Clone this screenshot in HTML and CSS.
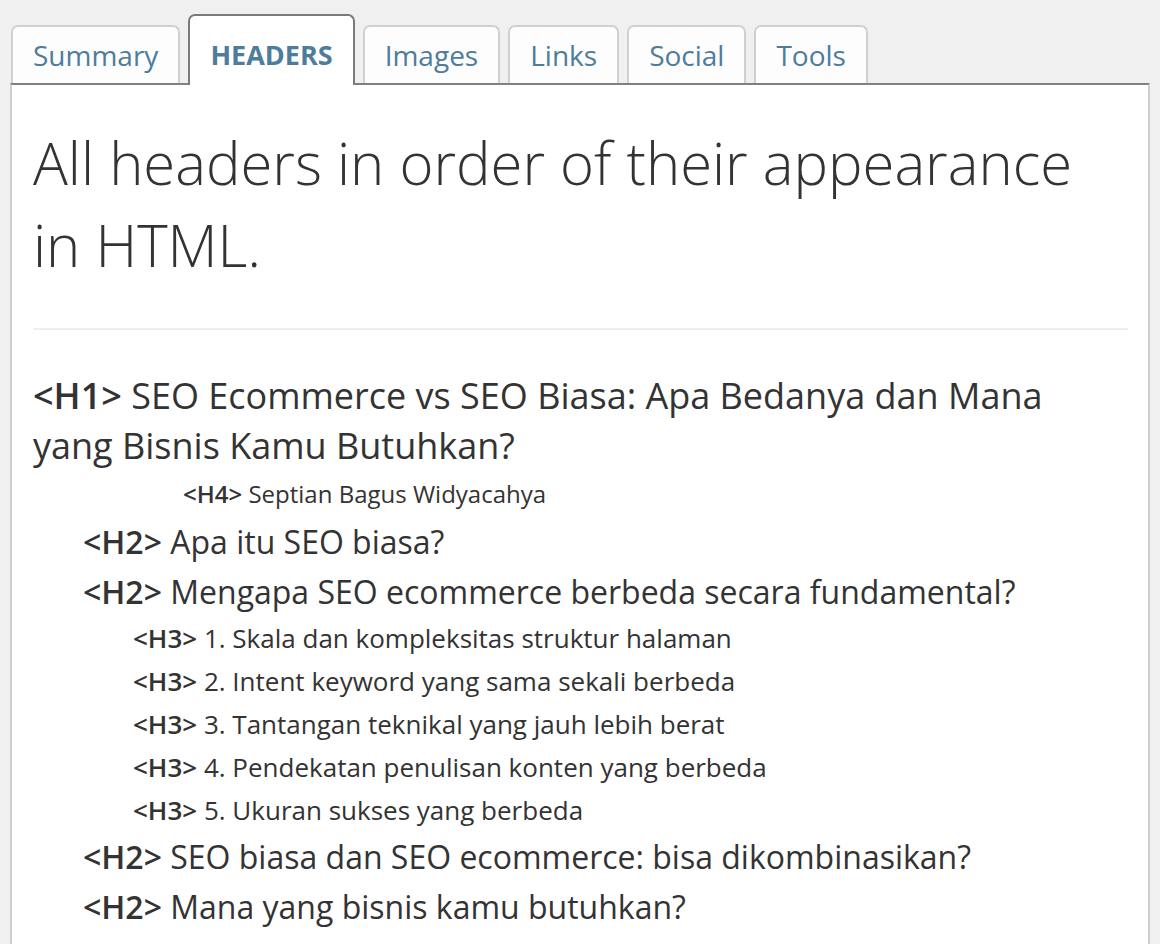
FILE: index.html
```html
<!DOCTYPE html>
<html lang="en">
  <head>
    <meta charset="UTF-8" />
    <meta name="viewport" content="width=device-width, initial-scale=1.0" />
    <title>Headers</title>
    <link rel="stylesheet" href="styles.css">
  </head>
  <body>
    <div class="tabs">
      <div class="tab">Summary</div>
      <div class="tab active">HEADERS</div>
      <div class="tab">Images</div>
      <div class="tab">Links</div>
      <div class="tab">Social</div>
      <div class="tab">Tools</div>
    </div>
    <div class="panel">
      <h1 class="title">All headers in order of their appearance in HTML.</h1>
      <hr class="rule">
      <div class="headers">
        <div class="hd h1"><b>&lt;H1&gt;</b> SEO Ecommerce vs SEO Biasa: Apa Bedanya dan Mana yang Bisnis Kamu Butuhkan?</div>
        <div class="hd h4"><b>&lt;H4&gt;</b> Septian Bagus Widyacahya</div>
        <div class="hd h2"><b>&lt;H2&gt;</b> Apa itu SEO biasa?</div>
        <div class="hd h2"><b>&lt;H2&gt;</b> Mengapa SEO ecommerce berbeda secara fundamental?</div>
        <div class="hd h3"><b>&lt;H3&gt;</b> 1. Skala dan kompleksitas struktur halaman</div>
        <div class="hd h3"><b>&lt;H3&gt;</b> 2. Intent keyword yang sama sekali berbeda</div>
        <div class="hd h3"><b>&lt;H3&gt;</b> 3. Tantangan teknikal yang jauh lebih berat</div>
        <div class="hd h3"><b>&lt;H3&gt;</b> 4. Pendekatan penulisan konten yang berbeda</div>
        <div class="hd h3"><b>&lt;H3&gt;</b> 5. Ukuran sukses yang berbeda</div>
        <div class="hd h2"><b>&lt;H2&gt;</b> SEO biasa dan SEO ecommerce: bisa dikombinasikan?</div>
        <div class="hd h2"><b>&lt;H2&gt;</b> Mana yang bisnis kamu butuhkan?</div>
      </div>
    </div>
  </body>
</html>
```

FILE: styles.css
```css
* {
  margin: 0;
  padding: 0;
  box-sizing: border-box;
}
body {
  background: #f0f0f0;
  font-family: "Open Sans", "Noto Sans", sans-serif;
  color: #333;
  height: 944px;
  overflow: hidden;
}

/* tab bar */
.tabs {
  display: flex;
  align-items: flex-end;
  gap: 8px;
  padding: 14px 0 0 11px;
}
.tab {
  height: 58px;
  padding: 0 20px;
  background: #fdfdfd;
  border: 2px solid #d0d0d0;
  border-bottom: none;
  border-radius: 7px 7px 0 0;
  color: #4e7c9c;
  font-size: 28px;
  line-height: 56px;
}
.tab.active {
  position: relative;
  z-index: 2;
  height: 71px;
  margin-bottom: -2px;
  background: #fff;
  border-color: #7a7a7a;
  font-size: 27px;
  font-weight: 700;
  line-height: 78px;
}

/* panel */
.panel {
  position: relative;
  margin: 0 10px;
  height: 900px;
  padding: 0 20px 0 21px;
  background: #fff;
  border-top: 2px solid #808080;
  border-left: 2px solid #cfcfcf;
  border-right: 2px solid #cfcfcf;
}
.title {
  padding-top: 37px;
  font-size: 58px;
  font-weight: 300;
  line-height: 82px;
  color: #333;
}
.rule {
  margin-top: 42px;
  border: none;
  border-top: 2px solid #eee;
}

/* header list */
.headers {
  padding: 41px 30px 0 0;
}
.hd b {
  font-weight: 600;
}
.h1 {
  font-size: 36px;
  line-height: 50px;
}
.h2 {
  padding-left: 50px;
  font-size: 32px;
  line-height: 50px;
}
.h3 {
  padding-left: 100px;
  font-size: 26px;
  line-height: 43px;
}
.h4 {
  padding-left: 150px;
  margin: 1px 0 2px;
  font-size: 24px;
  line-height: 43px;
}
```
